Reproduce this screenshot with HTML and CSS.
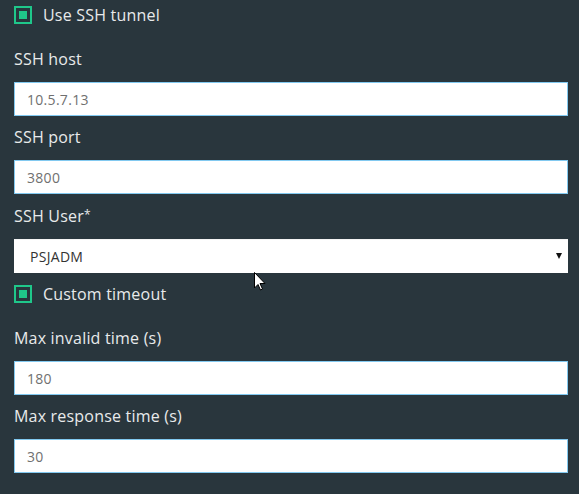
FILE: index.html
```html
<!DOCTYPE html>
<html>
<head>
<meta charset="utf-8">
<link rel="stylesheet" href="styles.css">
</head>
<body>
<form class="panel">
  <label class="check-row">
    <span class="check"><span class="check-dot"></span></span>
    <span class="check-text">Use SSH tunnel</span>
  </label>
  <div class="field">
    <div class="label">SSH host</div>
    <div class="input">10.5.7.13</div>
  </div>
  <div class="field">
    <div class="label">SSH port</div>
    <div class="input">3800</div>
  </div>
  <div class="field">
    <div class="label">SSH User<span class="req">*</span></div>
    <div class="select">PSJADM</div>
  </div>
  <label class="check-row">
    <span class="check"><span class="check-dot"></span></span>
    <span class="check-text">Custom timeout</span>
  </label>
  <div class="field">
    <div class="label">Max invalid time (s)</div>
    <div class="input">180</div>
  </div>
  <div class="field">
    <div class="label">Max response time (s)</div>
    <div class="input">30</div>
  </div>
</form>
<svg class="cursor" width="12" height="19" viewBox="0 0 12 19"><path d="M0.5 0.5 L0.5 16 L4 12.5 L6.5 18 L8.5 17 L6 11.5 L11 11.5 Z" fill="#fff" stroke="#000" stroke-width="1"/></svg>
</body>
</html>
```
FILE: styles.css
```css
html, body {
  margin: 0;
  padding: 0;
  background: #29363d;
}
body {
  width: 579px;
  height: 494px;
  overflow: hidden;
  position: relative;
  font-family: "Open Sans", "Noto Sans", sans-serif;
}
.panel {
  display: flex;
  flex-direction: column;
  padding: 5px 11px 0 14px;
}
.check-row {
  display: flex;
  align-items: center;
  height: 20px;
  gap: 11px;
  margin-bottom: 24px;
}
.check {
  box-sizing: border-box;
  width: 18px;
  height: 18px;
  border: 2px solid #1fc78a;
  padding: 3px;
  display: flex;
}
.check-dot {
  flex: 1;
  background: #1fc78a;
}
.check-text, .label {
  color: #e8eaeb;
  font-size: 16px;
  line-height: 20px;
  letter-spacing: 0.2px;
}
.label {
  margin-bottom: 13px;
}
.req {
  font-size: 12px;
  vertical-align: 3px;
}
.field {
  margin-bottom: 11px;
}
.input, .select {
  box-sizing: border-box;
  height: 34px;
  background: #fff;
  font-size: 14px;
  letter-spacing: 0.3px;
  display: flex;
  align-items: center;
}
.input {
  border: 1px solid #82c9f0;
  padding-left: 12px;
  color: #707070;
}
.select {
  position: relative;
  padding-left: 16px;
  color: #333;
  border-top: 1px solid #f4f4f4;
}
.select::after {
  content: "";
  position: absolute;
  right: 6px;
  top: 13px;
  border-left: 3.5px solid transparent;
  border-right: 3.5px solid transparent;
  border-top: 6px solid #111;
}
.cursor {
  position: absolute;
  left: 254px;
  top: 272px;
}
```
